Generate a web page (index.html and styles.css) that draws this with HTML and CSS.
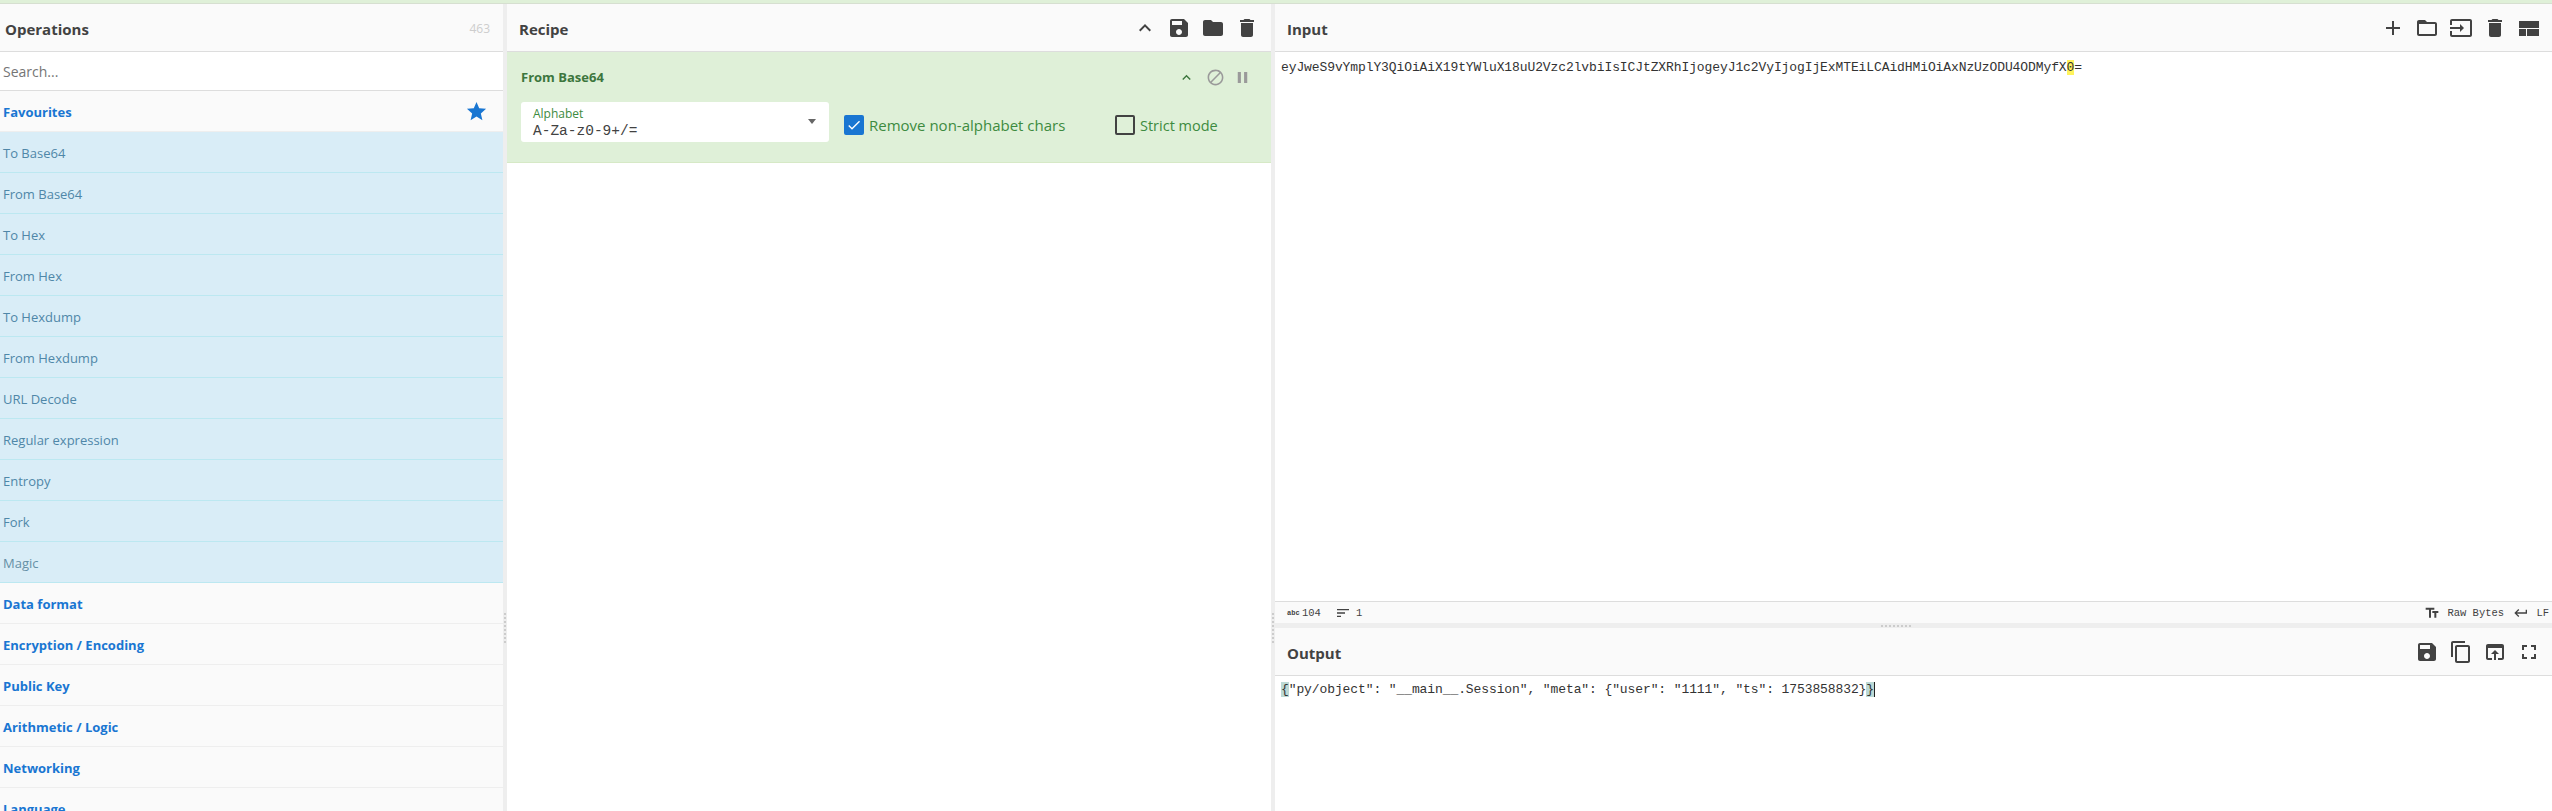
FILE: index.html
```html
<!DOCTYPE html>
<html lang="en">
<head>
<meta charset="utf-8">
<title>CyberChef</title>
<link rel="stylesheet" href="styles.css">
</head>
<body>
<svg class="defs" aria-hidden="true">
  <symbol id="i-save" viewBox="0 0 24 24"><path d="M17 3H5c-1.11 0-2 .9-2 2v14c0 1.1.89 2 2 2h14c1.1 0 2-.9 2-2V7l-4-4zm-5 16c-1.66 0-3-1.34-3-3s1.34-3 3-3 3 1.34 3 3-1.34 3-3 3zm3-10H5V5h10v4z"/></symbol>
  <symbol id="i-folder" viewBox="0 0 24 24"><path d="M10 4H4c-1.1 0-1.99.9-1.99 2L2 18c0 1.1.9 2 2 2h16c1.1 0 2-.9 2-2V8c0-1.1-.9-2-2-2h-8l-2-2z"/></symbol>
  <symbol id="i-delete" viewBox="0 0 24 24"><path d="M6 19c0 1.1.9 2 2 2h8c1.1 0 2-.9 2-2V7H6v12zM19 4h-3.5l-1-1h-5l-1 1H5v2h14V4z"/></symbol>
  <symbol id="i-less" viewBox="0 0 24 24"><path d="M12 8l-6 6 1.41 1.41L12 10.83l4.59 4.58L18 14z"/></symbol>
  <symbol id="i-add" viewBox="0 0 24 24"><path d="M19 13h-6v6h-2v-6H5v-2h6V5h2v6h6v2z"/></symbol>
  <symbol id="i-folder-open" viewBox="0 0 24 24"><path d="M20 6h-8l-2-2H4c-1.1 0-1.99.9-1.99 2L2 18c0 1.1.9 2 2 2h16c1.1 0 2-.9 2-2V8c0-1.1-.9-2-2-2zm0 12H4V8h16v10z"/></symbol>
  <symbol id="i-input" viewBox="0 0 24 24"><path d="M21 3.01H3c-1.1 0-2 .9-2 2V9h2V4.99h18v14.03H3V15H1v4.01c0 1.1.9 1.98 2 1.98h18c1.1 0 2-.88 2-1.98v-14c0-1.11-.9-2-2-2zM11 16l4-4-4-4v3H1v2h10v3z"/></symbol>
  <symbol id="i-compact" viewBox="0 0 24 24"><path d="M2 20h7v-7H2v7zm8 0h12v-7H10v7zM2 5v7h20V5H2z"/></symbol>
  <symbol id="i-copy" viewBox="0 0 24 24"><path d="M16 1H4c-1.1 0-2 .9-2 2v14h2V3h12V1zm3 4H8c-1.1 0-2 .9-2 2v14c0 1.1.9 2 2 2h11c1.1 0 2-.9 2-2V7c0-1.1-.9-2-2-2zm0 16H8V7h11v14z"/></symbol>
  <symbol id="i-open" viewBox="0 0 24 24"><path d="M19 4H5c-1.11 0-2 .9-2 2v12c0 1.1.89 2 2 2h4v-2H5V8h14v10h-4v2h4c1.1 0 2-.9 2-2V6c0-1.1-.89-2-2-2zm-7 6l-4 4h3v6h2v-6h3l-4-4z"/></symbol>
  <symbol id="i-full" viewBox="0 0 24 24"><path d="M7 14H5v5h5v-2H7v-3zm-2-4h2V7h3V5H5v5zm12 7h-3v2h5v-5h-2v3zM14 5v2h3v3h2V5h-5z"/></symbol>
  <symbol id="i-star" viewBox="0 0 24 24"><path d="M12 17.27L18.18 21l-1.64-7.03L22 9.24l-7.19-.61L12 2 9.19 8.63 2 9.24l5.46 4.73L5.82 21z"/></symbol>
  <symbol id="i-block" viewBox="0 0 24 24"><path d="M12 2C6.48 2 2 6.48 2 12s4.48 10 10 10 10-4.48 10-10S17.52 2 12 2zM4 12c0-4.42 3.58-8 8-8 1.85 0 3.55.63 4.9 1.69L5.69 16.9C4.63 15.55 4 13.85 4 12zm8 8c-1.85 0-3.55-.63-4.9-1.69L18.31 7.1C19.37 8.45 20 10.15 20 12c0 4.42-3.58 8-8 8z"/></symbol>
  <symbol id="i-pause" viewBox="0 0 24 24"><path d="M6 19h4V5H6v14zm8-14v14h4V5h-4z"/></symbol>
  <symbol id="i-return" viewBox="0 0 24 24"><path d="M19 7v4H5.83l3.58-3.59L8 6l-6 6 6 6 1.41-1.41L5.83 13H21V7z"/></symbol>
  <symbol id="i-sort" viewBox="0 0 24 24"><path d="M3 18h6v-2H3v2zM3 6v2h18V6H3zm0 7h12v-2H3v2z"/></symbol>
  <symbol id="i-text" viewBox="0 0 24 24"><path d="M2.5 4v3h5v12h3V7h5V4h-13zm19 5h-9v3h3v7h3v-7h3V9z"/></symbol>
  <symbol id="i-check" viewBox="0 0 24 24"><path d="M9 16.2L4.8 12l-1.4 1.4L9 19 21 7l-1.4-1.4z"/></symbol>
</svg>

<div class="banner"></div>
<main class="app">
  <section class="ops">
    <header class="title-bar ops-title">
      <h1>Operations</h1>
      <span class="op-count">463</span>
    </header>
    <div class="search">Search...</div>
    <div class="cat fav"><span>Favourites</span>
      <svg class="star"><use href="#i-star"/></svg>
    </div>
    <ul class="op-list">
      <li>To Base64</li>
      <li>From Base64</li>
      <li>To Hex</li>
      <li>From Hex</li>
      <li>To Hexdump</li>
      <li>From Hexdump</li>
      <li>URL Decode</li>
      <li>Regular expression</li>
      <li>Entropy</li>
      <li>Fork</li>
      <li>Magic</li>
    </ul>
    <div class="cat"><span>Data format</span></div>
    <div class="cat"><span>Encryption / Encoding</span></div>
    <div class="cat"><span>Public Key</span></div>
    <div class="cat"><span>Arithmetic / Logic</span></div>
    <div class="cat"><span>Networking</span></div>
    <div class="cat"><span>Language</span></div>
  </section>

  <div class="gutter-v"><span class="grip-v"></span></div>

  <section class="recipe">
    <header class="title-bar">
      <h1>Recipe</h1>
      <div class="tools">
        <svg class="ic ic-small"><use href="#i-less"/></svg>
        <svg class="ic"><use href="#i-save"/></svg>
        <svg class="ic"><use href="#i-folder"/></svg>
        <svg class="ic"><use href="#i-delete"/></svg>
      </div>
    </header>
    <article class="op-card">
      <div class="op-head">
        <h2>From Base64</h2>
        <div class="op-tools">
          <svg class="oi oi-green"><use href="#i-less"/></svg>
          <svg class="oi"><use href="#i-block"/></svg>
          <svg class="oi"><use href="#i-pause"/></svg>
        </div>
      </div>
      <div class="op-args">
        <div class="select">
          <span class="select-label">Alphabet</span>
          <span class="select-value">A-Za-z0-9+/=</span>
          <span class="caret"></span>
        </div>
        <label class="check first">
          <span class="box on"><svg><use href="#i-check"/></svg></span>
          <span>Remove non-alphabet chars</span>
        </label>
        <label class="check second">
          <span class="box"></span>
          <span>Strict mode</span>
        </label>
      </div>
    </article>
  </section>

  <div class="gutter-v"><span class="grip-v"></span></div>

  <section class="io">
    <header class="title-bar io-title">
      <h1>Input</h1>
      <div class="tools">
        <svg class="ic"><use href="#i-add"/></svg>
        <svg class="ic"><use href="#i-folder-open"/></svg>
        <svg class="ic"><use href="#i-input"/></svg>
        <svg class="ic"><use href="#i-delete"/></svg>
        <svg class="ic"><use href="#i-compact"/></svg>
      </div>
    </header>
    <div class="editor input-ed"><span>eyJweS9vYmplY3QiOiAiX19tYWluX18uU2Vzc2lvbiIsICJtZXRhIjogeyJ1c2VyIjogIjExMTEiLCAidHMiOiAxNzUzODU4ODMyfX<mark class="hl">0</mark>=</span></div>
    <div class="status">
      <div class="stat-group">
        <span class="abc">abc</span><span class="num">104</span>
        <svg class="si"><use href="#i-sort"/></svg><span class="num">1</span>
      </div>
      <div class="stat-group">
        <svg class="si si-text"><use href="#i-text"/></svg><span class="num raw">Raw Bytes</span>
        <svg class="si si-ret"><use href="#i-return"/></svg><span class="num">LF</span>
      </div>
    </div>
    <div class="gutter-h"><span class="grip-h"></span></div>
    <header class="title-bar io-title">
      <h1>Output</h1>
      <div class="tools">
        <svg class="ic"><use href="#i-save"/></svg>
        <svg class="ic"><use href="#i-copy"/></svg>
        <svg class="ic"><use href="#i-open"/></svg>
        <svg class="ic"><use href="#i-full"/></svg>
      </div>
    </header>
    <div class="editor output-ed"><span><span class="br">{</span>"py/object": "__main__.Session", "meta": {"user": "1111", "ts": 1753858832}<span class="br cursor">}</span></span></div>
  </section>
</main>
</body>
</html>
```

FILE: styles.css
```css
* { box-sizing: border-box; }
html, body { margin: 0; height: 100%; overflow: hidden; }
body {
  font-family: "Open Sans", "Noto Sans", sans-serif;
  color: #424242;
  background: #fff;
  display: flex;
  flex-direction: column;
}
.defs { width: 0; height: 0; position: absolute; }
.banner { height: 4px; flex: none; background: #dff0d8; border-bottom: 1px solid #d6dfd0; }
.app { flex: 1; min-height: 0; display: flex; }

.title-bar {
  height: 48px;
  flex: none;
  display: flex;
  align-items: center;
  justify-content: space-between;
  background: #fafafa;
  border-bottom: 1px solid #ddd;
  padding: 0 12px 0 12px;
}
h1 { margin: 3px 0 0; font-size: 15px; font-weight: 700; color: #424242; }

.ops { width: 503px; flex: none; background: #fafafa; overflow: hidden; }
.ops-title { padding: 0 13px 0 5px; }
.op-count { font-size: 12px; color: #cdcdcd; margin-top: 2px; }
.search {
  height: 39px;
  background: #fff;
  border-bottom: 1px solid #ddd;
  padding-left: 3px;
  font-size: 14px;
  line-height: 40px;
  color: #757575;
}
.cat {
  height: 41px;
  border-bottom: 1px solid #eee;
  padding-left: 3px;
  display: flex;
  align-items: center;
  justify-content: space-between;
  font-size: 13px;
  font-weight: 700;
  color: #1976d2;
}
.cat span { margin-top: 2px; }
.star { width: 23px; height: 23px; fill: #1976d2; margin-right: 15px; }
.op-list { list-style: none; margin: 0; padding: 0; }
.op-list li {
  height: 41px;
  padding-left: 3px;
  background: #d9edf7;
  border-bottom: 1px solid #bce8f1;
  font-size: 13px;
  line-height: 42px;
  color: #4f87a8;
}
.op-list li:last-child { color: #6590a6; }

.gutter-v {
  width: 4px;
  flex: none;
  background: #eee;
  display: flex;
  flex-direction: column;
  padding-top: 609px;
}
.grip-v {
  width: 2px;
  height: 30px;
  margin-left: 1px;
  background: repeating-linear-gradient(#ccc 0 2px, transparent 2px 4px);
}

.recipe { width: 764px; flex: none; display: flex; flex-direction: column; }
.tools { display: flex; align-items: center; gap: 10px; }
.ic { width: 24px; height: 24px; fill: #424242; display: block; }
.op-card {
  height: 111px;
  background: #dff0d8;
  border-bottom: 1px solid #d6e9c6;
  padding: 14px 14px 0;
  color: #3c763d;
}
.op-head { display: flex; justify-content: space-between; align-items: center; height: 22px; }
h2 { margin: 0; font-size: 13px; font-weight: 700; color: #3c763d; }
.op-tools { display: flex; gap: 8px; align-items: center; margin-right: 5px; }
.oi { width: 19px; height: 19px; fill: #9a9a9a; }
.oi-green { fill: #3c763d; width: 17px; height: 17px; margin-right: 3px; }
.op-args { display: flex; align-items: center; margin-top: 14px; }
.select {
  width: 308px;
  height: 40px;
  background: #fff;
  border-radius: 3px;
  padding: 5px 12px;
  position: relative;
  display: flex;
  flex-direction: column;
}
.select-label { font-size: 12px; line-height: 14px; color: #3d8b40; }
.select-value { font-family: "Liberation Mono", monospace; font-size: 14.5px; line-height: 21px; color: #424242; }
.caret {
  position: absolute;
  right: 13px;
  top: 17px;
  border: 4px solid transparent;
  border-top: 5px solid #666;
}
.check { display: flex; align-items: center; gap: 5px; font-size: 15px; color: #3d8b40; margin-top: 6px; }
.first { margin-left: 15px; width: 271px; }
.second { font-size: 14.5px; }
.box {
  width: 20px;
  height: 20px;
  border: 2px solid #424242;
  border-radius: 2px;
  display: block;
  flex: none;
}
.box.on { background: #1976d2; border-color: #1976d2; }
.box svg { width: 16px; height: 16px; fill: #fff; display: block; }

.io { flex: 1; min-width: 0; display: flex; flex-direction: column; }
.io-title { padding: 0 11px 0 12px; }
.editor {
  font-family: "Liberation Mono", monospace;
  font-size: 13px;
  letter-spacing: -.1px;
  color: #333;
  padding: 7px 0 0 6px;
  line-height: 17px;
  white-space: pre;
}
.input-ed { height: 550px; flex: none; border-bottom: 1px solid #ddd; }
.output-ed { flex: 1; padding-top: 5px; }
.hl { background: #fff35c; color: inherit; }
.br { background: #bcd9d5; }
.cursor { border-right: 1px solid #222; }
.status {
  height: 21px;
  flex: none;
  background: #fafafa;
  display: flex;
  justify-content: space-between;
  align-items: center;
  padding: 0 3px 0 12px;
  font-family: "Liberation Mono", monospace;
  font-size: 10.5px;
  color: #424242;
}
.stat-group { display: flex; align-items: center; }
.abc { font-weight: 700; font-size: 7px; width: 15px; }
.num { white-space: nowrap; }
.si { width: 16px; height: 16px; fill: #424242; margin-left: 14px; margin-right: 5px; }
.si-text { margin-right: 7px; }
.si-ret { margin-left: 13px; margin-right: 7px; }
.raw { width: 53px; }
.gutter-h {
  height: 5px;
  flex: none;
  background: #eee;
  display: flex;
  justify-content: center;
  align-items: center;
}
.grip-h {
  width: 30px;
  height: 2px;
  margin-left: -36px;
  background: repeating-linear-gradient(90deg, #ccc 0 2px, transparent 2px 4px);
}
```
